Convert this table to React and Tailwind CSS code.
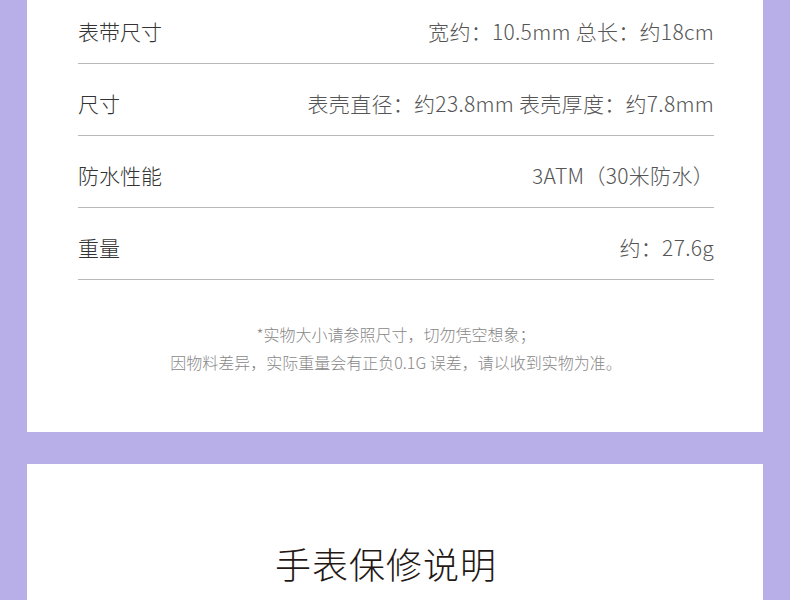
const specs = [
  { label: '表带尺寸', value: '宽约：10.5mm 总长：约18cm' },
  { label: '尺寸', value: '表壳直径：约23.8mm 表壳厚度：约7.8mm' },
  { label: '防水性能', value: '3ATM（30米防水）' },
  { label: '重量', value: '约：27.6g' },
];

function SpecRow({ label, value }) {
  return (
    <div className="flex h-[72px] items-center justify-between border-b border-[#b9b9b9] pt-[8px]">
      <span className="text-[21px] font-light text-[#333333]">{label}</span>
      <span className="text-[21px] font-light tracking-[0.3px] text-[#555555]">{value}</span>
    </div>
  );
}

export default function App() {
  return (
    <div
      className="h-[600px] overflow-hidden bg-[#b8aee8] px-[27px]"
      style={{ fontFamily: '"Noto Sans CJK SC", "Noto Sans", sans-serif' }}
    >
      <div className="-mt-[8px] bg-white pb-[56px] pl-[51px] pr-[49px]">
        {specs.map((s) => (
          <SpecRow key={s.label} label={s.label} value={s.value} />
        ))}
        <div className="mt-[40px] text-center text-[16px] font-light leading-[28px] text-[#888888]">
          <p>*实物大小请参照尺寸，切勿凭空想象；</p>
          <p>因物料差异，实际重量会有正负0.1G 误差，请以收到实物为准。</p>
        </div>
      </div>

      <div className="mt-[32px] h-[200px] bg-white pr-[18px] pt-[74px]">
        <h2 className="text-center text-[36px] font-light leading-[50px] tracking-[1px] text-[#231815]">
          手表保修说明
        </h2>
      </div>
    </div>
  );
}
